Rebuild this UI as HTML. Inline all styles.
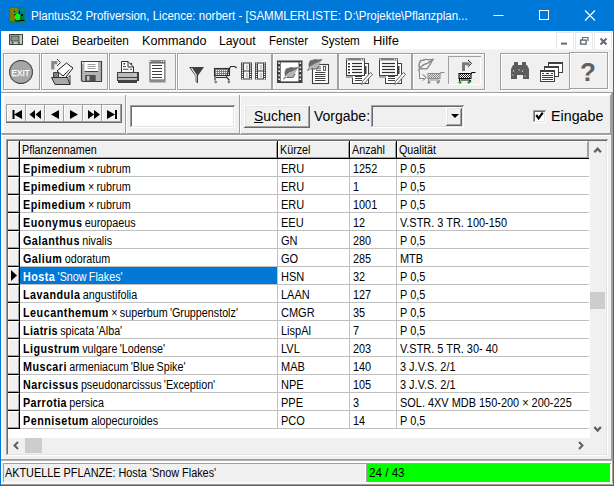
<!DOCTYPE html>
<html><head><meta charset="utf-8"><style>
html,body{margin:0;padding:0;width:614px;height:486px;overflow:hidden;background:#0078d7}
body{position:relative;font-family:"Liberation Sans",sans-serif}
div,span,svg{position:absolute;display:block}
span{white-space:pre}
b{font-weight:bold}
</style></head><body>
<div style="left:0px;top:0px;width:614px;height:486px;background:#0078d7;"></div>
<div style="left:1px;top:31px;width:612px;height:453px;background:#f0f0f0;"></div>
<span style="left:31px;top:9.84px;font-size:12px;line-height:12px;color:#fff;font-weight:normal;transform:scaleX(0.96);transform-origin:0 0;">Plantus32 Profiversion, Licence: norbert - [SAMMLERLISTE: D:\Projekte\Pflanzplan...</span>
<div style="left:1px;top:31px;width:612px;height:18px;background:#ffffff;"></div>
<span style="left:31px;top:34.84px;font-size:12px;line-height:12px;color:#000;font-weight:normal;">Datei</span>
<span style="left:72px;top:34.84px;font-size:12px;line-height:12px;color:#000;font-weight:normal;transform:scaleX(0.98);transform-origin:0 0;">Bearbeiten</span>
<span style="left:142px;top:34.84px;font-size:12px;line-height:12px;color:#000;font-weight:normal;transform:scaleX(1.05);transform-origin:0 0;">Kommando</span>
<span style="left:219px;top:34.84px;font-size:12px;line-height:12px;color:#000;font-weight:normal;transform:scaleX(1.02);transform-origin:0 0;">Layout</span>
<span style="left:269px;top:34.84px;font-size:12px;line-height:12px;color:#000;font-weight:normal;transform:scaleX(0.96);transform-origin:0 0;">Fenster</span>
<span style="left:321px;top:34.84px;font-size:12px;line-height:12px;color:#000;font-weight:normal;transform:scaleX(0.97);transform-origin:0 0;">System</span>
<span style="left:373px;top:34.84px;font-size:12px;line-height:12px;color:#000;font-weight:normal;transform:scaleX(1.08);transform-origin:0 0;">Hilfe</span>
<div style="left:556px;top:32px;width:18px;height:1px;background:#e8e8e8;"></div>
<div style="left:556px;top:32px;width:1px;height:18px;background:#e8e8e8;"></div>
<div style="left:556px;top:49px;width:18px;height:1px;background:#e8e8e8;"></div>
<div style="left:573px;top:33px;width:1px;height:17px;background:#e8e8e8;"></div>
<div style="left:575px;top:32px;width:18px;height:1px;background:#e8e8e8;"></div>
<div style="left:575px;top:32px;width:1px;height:18px;background:#e8e8e8;"></div>
<div style="left:575px;top:49px;width:18px;height:1px;background:#e8e8e8;"></div>
<div style="left:592px;top:33px;width:1px;height:17px;background:#e8e8e8;"></div>
<div style="left:594px;top:32px;width:18px;height:1px;background:#e8e8e8;"></div>
<div style="left:594px;top:32px;width:1px;height:18px;background:#e8e8e8;"></div>
<div style="left:594px;top:49px;width:18px;height:1px;background:#e8e8e8;"></div>
<div style="left:611px;top:33px;width:1px;height:17px;background:#e8e8e8;"></div>
<div style="left:1px;top:49px;width:612px;height:1px;background:#f5f5f5;"></div>
<div style="left:4px;top:54px;width:37px;height:1px;background:#ffffff;"></div>
<div style="left:4px;top:54px;width:1px;height:37px;background:#ffffff;"></div>
<div style="left:4px;top:90px;width:37px;height:1px;background:#ffffff;"></div>
<div style="left:40px;top:55px;width:1px;height:36px;background:#ffffff;"></div>
<div style="left:3px;top:53px;width:37px;height:1px;background:#a0a0a0;"></div>
<div style="left:3px;top:53px;width:1px;height:37px;background:#a0a0a0;"></div>
<div style="left:3px;top:89px;width:37px;height:1px;background:#a0a0a0;"></div>
<div style="left:39px;top:54px;width:1px;height:36px;background:#a0a0a0;"></div>
<div style="left:42px;top:54px;width:67px;height:1px;background:#ffffff;"></div>
<div style="left:42px;top:54px;width:1px;height:37px;background:#ffffff;"></div>
<div style="left:42px;top:90px;width:67px;height:1px;background:#ffffff;"></div>
<div style="left:108px;top:55px;width:1px;height:36px;background:#ffffff;"></div>
<div style="left:41px;top:53px;width:67px;height:1px;background:#a0a0a0;"></div>
<div style="left:41px;top:53px;width:1px;height:37px;background:#a0a0a0;"></div>
<div style="left:41px;top:89px;width:67px;height:1px;background:#a0a0a0;"></div>
<div style="left:107px;top:54px;width:1px;height:36px;background:#a0a0a0;"></div>
<div style="left:110px;top:54px;width:67px;height:1px;background:#ffffff;"></div>
<div style="left:110px;top:54px;width:1px;height:37px;background:#ffffff;"></div>
<div style="left:110px;top:90px;width:67px;height:1px;background:#ffffff;"></div>
<div style="left:176px;top:55px;width:1px;height:36px;background:#ffffff;"></div>
<div style="left:109px;top:53px;width:67px;height:1px;background:#a0a0a0;"></div>
<div style="left:109px;top:53px;width:1px;height:37px;background:#a0a0a0;"></div>
<div style="left:109px;top:89px;width:67px;height:1px;background:#a0a0a0;"></div>
<div style="left:175px;top:54px;width:1px;height:36px;background:#a0a0a0;"></div>
<div style="left:178px;top:54px;width:95px;height:1px;background:#ffffff;"></div>
<div style="left:178px;top:54px;width:1px;height:37px;background:#ffffff;"></div>
<div style="left:178px;top:90px;width:95px;height:1px;background:#ffffff;"></div>
<div style="left:272px;top:55px;width:1px;height:36px;background:#ffffff;"></div>
<div style="left:177px;top:53px;width:95px;height:1px;background:#a0a0a0;"></div>
<div style="left:177px;top:53px;width:1px;height:37px;background:#a0a0a0;"></div>
<div style="left:177px;top:89px;width:95px;height:1px;background:#a0a0a0;"></div>
<div style="left:271px;top:54px;width:1px;height:36px;background:#a0a0a0;"></div>
<div style="left:273px;top:54px;width:66px;height:1px;background:#ffffff;"></div>
<div style="left:273px;top:54px;width:1px;height:37px;background:#ffffff;"></div>
<div style="left:273px;top:90px;width:66px;height:1px;background:#ffffff;"></div>
<div style="left:338px;top:55px;width:1px;height:36px;background:#ffffff;"></div>
<div style="left:272px;top:53px;width:66px;height:1px;background:#a0a0a0;"></div>
<div style="left:272px;top:53px;width:1px;height:37px;background:#a0a0a0;"></div>
<div style="left:272px;top:89px;width:66px;height:1px;background:#a0a0a0;"></div>
<div style="left:337px;top:54px;width:1px;height:36px;background:#a0a0a0;"></div>
<div style="left:339px;top:54px;width:74px;height:1px;background:#ffffff;"></div>
<div style="left:339px;top:54px;width:1px;height:37px;background:#ffffff;"></div>
<div style="left:339px;top:90px;width:74px;height:1px;background:#ffffff;"></div>
<div style="left:412px;top:55px;width:1px;height:36px;background:#ffffff;"></div>
<div style="left:338px;top:53px;width:74px;height:1px;background:#a0a0a0;"></div>
<div style="left:338px;top:53px;width:1px;height:37px;background:#a0a0a0;"></div>
<div style="left:338px;top:89px;width:74px;height:1px;background:#a0a0a0;"></div>
<div style="left:411px;top:54px;width:1px;height:36px;background:#a0a0a0;"></div>
<div style="left:413px;top:54px;width:73px;height:1px;background:#ffffff;"></div>
<div style="left:413px;top:54px;width:1px;height:37px;background:#ffffff;"></div>
<div style="left:413px;top:90px;width:73px;height:1px;background:#ffffff;"></div>
<div style="left:485px;top:55px;width:1px;height:36px;background:#ffffff;"></div>
<div style="left:412px;top:53px;width:73px;height:1px;background:#a0a0a0;"></div>
<div style="left:412px;top:53px;width:1px;height:37px;background:#a0a0a0;"></div>
<div style="left:412px;top:89px;width:73px;height:1px;background:#a0a0a0;"></div>
<div style="left:484px;top:54px;width:1px;height:36px;background:#a0a0a0;"></div>
<div style="left:501px;top:54px;width:70px;height:1px;background:#ffffff;"></div>
<div style="left:501px;top:54px;width:1px;height:37px;background:#ffffff;"></div>
<div style="left:501px;top:90px;width:70px;height:1px;background:#ffffff;"></div>
<div style="left:570px;top:55px;width:1px;height:36px;background:#ffffff;"></div>
<div style="left:500px;top:53px;width:70px;height:1px;background:#a0a0a0;"></div>
<div style="left:500px;top:53px;width:1px;height:37px;background:#a0a0a0;"></div>
<div style="left:500px;top:89px;width:70px;height:1px;background:#a0a0a0;"></div>
<div style="left:569px;top:54px;width:1px;height:36px;background:#a0a0a0;"></div>
<div style="left:570px;top:53px;width:39px;height:1px;background:#ffffff;"></div>
<div style="left:570px;top:53px;width:1px;height:37px;background:#ffffff;"></div>
<div style="left:570px;top:89px;width:39px;height:1px;background:#ffffff;"></div>
<div style="left:608px;top:54px;width:1px;height:36px;background:#ffffff;"></div>
<div style="left:569px;top:52px;width:39px;height:1px;background:#a0a0a0;"></div>
<div style="left:569px;top:52px;width:1px;height:37px;background:#a0a0a0;"></div>
<div style="left:569px;top:88px;width:39px;height:1px;background:#a0a0a0;"></div>
<div style="left:607px;top:53px;width:1px;height:36px;background:#a0a0a0;"></div>
<div style="left:448px;top:56px;width:33px;height:1px;background:#a0a0a0;"></div>
<div style="left:448px;top:56px;width:1px;height:29px;background:#a0a0a0;"></div>
<div style="left:448px;top:84px;width:33px;height:1px;background:#ffffff;"></div>
<div style="left:480px;top:57px;width:1px;height:28px;background:#ffffff;"></div>
<div style="left:1px;top:92px;width:612px;height:1px;background:#a0a0a0;"></div>
<div style="left:1px;top:93px;width:612px;height:1px;background:#ffffff;"></div>
<div style="left:1px;top:94px;width:612px;height:1px;background:#ffffff;"></div>
<div style="left:1px;top:95px;width:612px;height:1px;background:#ffffff;"></div>
<div style="left:1px;top:93px;width:1px;height:41px;background:#ffffff;"></div>
<div style="left:2px;top:93px;width:1px;height:41px;background:#ffffff;"></div>
<div style="left:3px;top:93px;width:1px;height:41px;background:#ffffff;"></div>
<div style="left:610px;top:95px;width:1px;height:39px;background:#a0a0a0;"></div>
<div style="left:611px;top:93px;width:1px;height:41px;background:#a0a0a0;"></div>
<div style="left:612px;top:93px;width:1px;height:41px;background:#a0a0a0;"></div>
<div style="left:1px;top:133px;width:612px;height:1px;background:#a0a0a0;"></div>
<div style="left:6px;top:104px;width:116px;height:19px;background:#f0f0f0;"></div>
<div style="left:6px;top:104px;width:116px;height:1px;background:#a0a0a0;"></div>
<div style="left:6px;top:104px;width:1px;height:19px;background:#a0a0a0;"></div>
<div style="left:6px;top:122px;width:116px;height:1px;background:#696969;"></div>
<div style="left:121px;top:104px;width:1px;height:19px;background:#696969;"></div>
<div style="left:7px;top:105px;width:19px;height:1px;background:#ffffff;"></div>
<div style="left:7px;top:105px;width:1px;height:17px;background:#ffffff;"></div>
<div style="left:7px;top:121px;width:19px;height:1px;background:#a0a0a0;"></div>
<div style="left:25px;top:105px;width:1px;height:17px;background:#a0a0a0;"></div>
<div style="left:26px;top:105px;width:19px;height:1px;background:#ffffff;"></div>
<div style="left:26px;top:105px;width:1px;height:17px;background:#ffffff;"></div>
<div style="left:26px;top:121px;width:19px;height:1px;background:#a0a0a0;"></div>
<div style="left:44px;top:105px;width:1px;height:17px;background:#a0a0a0;"></div>
<div style="left:45px;top:105px;width:19px;height:1px;background:#ffffff;"></div>
<div style="left:45px;top:105px;width:1px;height:17px;background:#ffffff;"></div>
<div style="left:45px;top:121px;width:19px;height:1px;background:#a0a0a0;"></div>
<div style="left:63px;top:105px;width:1px;height:17px;background:#a0a0a0;"></div>
<div style="left:64px;top:105px;width:19px;height:1px;background:#ffffff;"></div>
<div style="left:64px;top:105px;width:1px;height:17px;background:#ffffff;"></div>
<div style="left:64px;top:121px;width:19px;height:1px;background:#a0a0a0;"></div>
<div style="left:82px;top:105px;width:1px;height:17px;background:#a0a0a0;"></div>
<div style="left:83px;top:105px;width:19px;height:1px;background:#ffffff;"></div>
<div style="left:83px;top:105px;width:1px;height:17px;background:#ffffff;"></div>
<div style="left:83px;top:121px;width:19px;height:1px;background:#a0a0a0;"></div>
<div style="left:101px;top:105px;width:1px;height:17px;background:#a0a0a0;"></div>
<div style="left:102px;top:105px;width:19px;height:1px;background:#ffffff;"></div>
<div style="left:102px;top:105px;width:1px;height:17px;background:#ffffff;"></div>
<div style="left:102px;top:121px;width:19px;height:1px;background:#a0a0a0;"></div>
<div style="left:120px;top:105px;width:1px;height:17px;background:#a0a0a0;"></div>
<div style="left:125px;top:95px;width:1px;height:39px;background:#a0a0a0;"></div>
<div style="left:126px;top:95px;width:1px;height:39px;background:#ffffff;"></div>
<div style="left:239px;top:95px;width:1px;height:39px;background:#a0a0a0;"></div>
<div style="left:240px;top:95px;width:1px;height:39px;background:#ffffff;"></div>
<div style="left:130px;top:105px;width:105px;height:23px;background:#ffffff;"></div>
<div style="left:130px;top:105px;width:105px;height:1px;background:#a0a0a0;"></div>
<div style="left:130px;top:105px;width:1px;height:23px;background:#a0a0a0;"></div>
<div style="left:130px;top:127px;width:105px;height:1px;background:#ffffff;"></div>
<div style="left:234px;top:106px;width:1px;height:22px;background:#ffffff;"></div>
<div style="left:131px;top:106px;width:103px;height:1px;background:#696969;"></div>
<div style="left:131px;top:106px;width:1px;height:21px;background:#696969;"></div>
<div style="left:131px;top:126px;width:103px;height:1px;background:#e3e3e3;"></div>
<div style="left:233px;top:107px;width:1px;height:20px;background:#e3e3e3;"></div>
<div style="left:244px;top:105px;width:66px;height:23px;background:#f0f0f0;"></div>
<div style="left:244px;top:105px;width:66px;height:1px;background:#ffffff;"></div>
<div style="left:244px;top:105px;width:1px;height:23px;background:#ffffff;"></div>
<div style="left:244px;top:127px;width:66px;height:1px;background:#696969;"></div>
<div style="left:309px;top:106px;width:1px;height:22px;background:#696969;"></div>
<div style="left:245px;top:106px;width:64px;height:1px;background:#e3e3e3;"></div>
<div style="left:245px;top:106px;width:1px;height:21px;background:#e3e3e3;"></div>
<div style="left:245px;top:126px;width:64px;height:1px;background:#a0a0a0;"></div>
<div style="left:308px;top:107px;width:1px;height:20px;background:#a0a0a0;"></div>
<span style="left:254px;top:109.15px;font-size:14px;line-height:14px;color:#000;font-weight:normal;transform:scaleX(0.99);transform-origin:0 0;"><u>S</u>uchen</span>
<span style="left:314px;top:109.15px;font-size:14px;line-height:14px;color:#000;font-weight:normal;">Vorgabe:</span>
<div style="left:371px;top:105px;width:93px;height:1px;background:#a0a0a0;"></div>
<div style="left:371px;top:105px;width:1px;height:23px;background:#a0a0a0;"></div>
<div style="left:371px;top:127px;width:93px;height:1px;background:#ffffff;"></div>
<div style="left:463px;top:106px;width:1px;height:22px;background:#ffffff;"></div>
<div style="left:372px;top:106px;width:91px;height:1px;background:#696969;"></div>
<div style="left:372px;top:106px;width:1px;height:21px;background:#696969;"></div>
<div style="left:372px;top:126px;width:91px;height:1px;background:#e3e3e3;"></div>
<div style="left:462px;top:107px;width:1px;height:20px;background:#e3e3e3;"></div>
<div style="left:446px;top:107px;width:16px;height:1px;background:#ffffff;"></div>
<div style="left:446px;top:107px;width:1px;height:19px;background:#ffffff;"></div>
<div style="left:446px;top:125px;width:16px;height:1px;background:#696969;"></div>
<div style="left:461px;top:108px;width:1px;height:18px;background:#696969;"></div>
<div style="left:447px;top:108px;width:14px;height:1px;background:#e3e3e3;"></div>
<div style="left:447px;top:108px;width:1px;height:17px;background:#e3e3e3;"></div>
<div style="left:447px;top:124px;width:14px;height:1px;background:#a0a0a0;"></div>
<div style="left:460px;top:109px;width:1px;height:16px;background:#a0a0a0;"></div>
<div style="left:533px;top:110px;width:13px;height:13px;background:#ffffff;"></div>
<div style="left:533px;top:110px;width:13px;height:1px;background:#a0a0a0;"></div>
<div style="left:533px;top:110px;width:1px;height:13px;background:#a0a0a0;"></div>
<div style="left:533px;top:122px;width:13px;height:1px;background:#ffffff;"></div>
<div style="left:545px;top:111px;width:1px;height:12px;background:#ffffff;"></div>
<div style="left:534px;top:111px;width:11px;height:1px;background:#696969;"></div>
<div style="left:534px;top:111px;width:1px;height:11px;background:#696969;"></div>
<div style="left:534px;top:121px;width:11px;height:1px;background:#e3e3e3;"></div>
<div style="left:544px;top:112px;width:1px;height:10px;background:#e3e3e3;"></div>
<span style="left:551px;top:109.15px;font-size:14px;line-height:14px;color:#000;font-weight:normal;transform:scaleX(1.02);transform-origin:0 0;">Eingabe</span>
<div style="left:2px;top:134px;width:611px;height:1px;background:#a0a0a0;"></div>
<div style="left:1px;top:135px;width:612px;height:1px;background:#ffffff;"></div>
<div style="left:1px;top:134px;width:1px;height:327px;background:#ffffff;"></div>
<div style="left:2px;top:135px;width:1px;height:326px;background:#ffffff;"></div>
<div style="left:611px;top:134px;width:1px;height:327px;background:#a0a0a0;"></div>
<div style="left:612px;top:134px;width:1px;height:327px;background:#a0a0a0;"></div>
<div style="left:1px;top:459px;width:612px;height:1px;background:#a0a0a0;"></div>
<div style="left:1px;top:460px;width:612px;height:1px;background:#b0b0b0;"></div>
<div style="left:6px;top:139px;width:602px;height:317px;background:#ffffff;"></div>
<div style="left:6px;top:139px;width:602px;height:1px;background:#a0a0a0;"></div>
<div style="left:6px;top:139px;width:1px;height:317px;background:#a0a0a0;"></div>
<div style="left:6px;top:455px;width:602px;height:1px;background:#ffffff;"></div>
<div style="left:607px;top:140px;width:1px;height:316px;background:#ffffff;"></div>
<div style="left:7px;top:140px;width:600px;height:1px;background:#696969;"></div>
<div style="left:7px;top:140px;width:1px;height:315px;background:#696969;"></div>
<div style="left:7px;top:454px;width:600px;height:1px;background:#e3e3e3;"></div>
<div style="left:606px;top:141px;width:1px;height:314px;background:#e3e3e3;"></div>
<div style="left:8px;top:141px;width:581px;height:17px;background:#f0f0f0;"></div>
<div style="left:8px;top:141px;width:11px;height:1px;background:#ffffff;"></div>
<div style="left:8px;top:141px;width:1px;height:17px;background:#ffffff;"></div>
<div style="left:8px;top:157px;width:11px;height:1px;background:#a0a0a0;"></div>
<div style="left:18px;top:142px;width:1px;height:16px;background:#a0a0a0;"></div>
<div style="left:19px;top:141px;width:1px;height:18px;background:#000;"></div>
<div style="left:20px;top:141px;width:257px;height:1px;background:#ffffff;"></div>
<div style="left:20px;top:141px;width:1px;height:17px;background:#ffffff;"></div>
<div style="left:20px;top:157px;width:257px;height:1px;background:#a0a0a0;"></div>
<div style="left:276px;top:142px;width:1px;height:16px;background:#a0a0a0;"></div>
<div style="left:277px;top:141px;width:1px;height:18px;background:#000;"></div>
<div style="left:278px;top:141px;width:71px;height:1px;background:#ffffff;"></div>
<div style="left:278px;top:141px;width:1px;height:17px;background:#ffffff;"></div>
<div style="left:278px;top:157px;width:71px;height:1px;background:#a0a0a0;"></div>
<div style="left:348px;top:142px;width:1px;height:16px;background:#a0a0a0;"></div>
<div style="left:349px;top:141px;width:1px;height:18px;background:#000;"></div>
<div style="left:350px;top:141px;width:46px;height:1px;background:#ffffff;"></div>
<div style="left:350px;top:141px;width:1px;height:17px;background:#ffffff;"></div>
<div style="left:350px;top:157px;width:46px;height:1px;background:#a0a0a0;"></div>
<div style="left:395px;top:142px;width:1px;height:16px;background:#a0a0a0;"></div>
<div style="left:396px;top:141px;width:1px;height:18px;background:#000;"></div>
<div style="left:397px;top:141px;width:191px;height:1px;background:#ffffff;"></div>
<div style="left:397px;top:141px;width:1px;height:17px;background:#ffffff;"></div>
<div style="left:397px;top:157px;width:191px;height:1px;background:#a0a0a0;"></div>
<div style="left:587px;top:142px;width:1px;height:16px;background:#a0a0a0;"></div>
<div style="left:588px;top:141px;width:1px;height:17px;background:#a0a0a0;"></div>
<div style="left:8px;top:158px;width:581px;height:1px;background:#000;"></div>
<span style="left:22px;top:144.42px;font-size:12.5px;line-height:12.5px;color:#000;font-weight:normal;transform:scaleX(0.86);transform-origin:0 0;">Pflanzennamen</span>
<span style="left:280px;top:144.42px;font-size:12.5px;line-height:12.5px;color:#000;font-weight:normal;transform:scaleX(0.86);transform-origin:0 0;">Kürzel</span>
<span style="left:352px;top:144.42px;font-size:12.5px;line-height:12.5px;color:#000;font-weight:normal;transform:scaleX(0.86);transform-origin:0 0;">Anzahl</span>
<span style="left:399px;top:144.42px;font-size:12.5px;line-height:12.5px;color:#000;font-weight:normal;transform:scaleX(0.86);transform-origin:0 0;">Qualität</span>
<div style="left:8px;top:159px;width:11px;height:1px;background:#ffffff;"></div>
<div style="left:8px;top:159px;width:1px;height:17px;background:#ffffff;"></div>
<div style="left:8px;top:175px;width:11px;height:1px;background:#a0a0a0;"></div>
<div style="left:18px;top:160px;width:1px;height:16px;background:#a0a0a0;"></div>
<div style="left:9px;top:160px;width:9px;height:15px;background:#f0f0f0;"></div>
<div style="left:19px;top:159px;width:1px;height:18px;background:#000;"></div>
<div style="left:8px;top:176px;width:12px;height:1px;background:#000;"></div>
<div style="left:20px;top:176px;width:569px;height:1px;background:#c0c0c0;"></div>
<div style="left:277px;top:159px;width:1px;height:18px;background:#c0c0c0;"></div>
<div style="left:349px;top:159px;width:1px;height:18px;background:#c0c0c0;"></div>
<div style="left:396px;top:159px;width:1px;height:18px;background:#c0c0c0;"></div>
<span style="left:23px;top:163.42px;font-size:12.5px;line-height:12.5px;color:#000;transform:scaleX(0.86);transform-origin:0 0;word-spacing:-0.8px"><b style="letter-spacing:0.609px">Epimedium</b> × rubrum</span>
<span style="left:281px;top:163.42px;font-size:12.5px;line-height:12.5px;color:#000;font-weight:normal;transform:scaleX(0.88);transform-origin:0 0;">ERU</span>
<span style="left:353px;top:163.42px;font-size:12.5px;line-height:12.5px;color:#000;font-weight:normal;transform:scaleX(0.87);transform-origin:0 0;">1252</span>
<span style="left:400px;top:163.42px;font-size:12.5px;line-height:12.5px;color:#000;font-weight:normal;transform:scaleX(0.875);transform-origin:0 0;">P 0,5</span>
<div style="left:8px;top:177px;width:11px;height:1px;background:#ffffff;"></div>
<div style="left:8px;top:177px;width:1px;height:17px;background:#ffffff;"></div>
<div style="left:8px;top:193px;width:11px;height:1px;background:#a0a0a0;"></div>
<div style="left:18px;top:178px;width:1px;height:16px;background:#a0a0a0;"></div>
<div style="left:9px;top:178px;width:9px;height:15px;background:#f0f0f0;"></div>
<div style="left:19px;top:177px;width:1px;height:18px;background:#000;"></div>
<div style="left:8px;top:194px;width:12px;height:1px;background:#000;"></div>
<div style="left:20px;top:194px;width:569px;height:1px;background:#c0c0c0;"></div>
<div style="left:277px;top:177px;width:1px;height:18px;background:#c0c0c0;"></div>
<div style="left:349px;top:177px;width:1px;height:18px;background:#c0c0c0;"></div>
<div style="left:396px;top:177px;width:1px;height:18px;background:#c0c0c0;"></div>
<span style="left:23px;top:181.42px;font-size:12.5px;line-height:12.5px;color:#000;transform:scaleX(0.86);transform-origin:0 0;word-spacing:-0.8px"><b style="letter-spacing:0.609px">Epimedium</b> × rubrum</span>
<span style="left:281px;top:181.42px;font-size:12.5px;line-height:12.5px;color:#000;font-weight:normal;transform:scaleX(0.88);transform-origin:0 0;">ERU</span>
<span style="left:353px;top:181.42px;font-size:12.5px;line-height:12.5px;color:#000;font-weight:normal;transform:scaleX(0.87);transform-origin:0 0;">1</span>
<span style="left:400px;top:181.42px;font-size:12.5px;line-height:12.5px;color:#000;font-weight:normal;transform:scaleX(0.875);transform-origin:0 0;">P 0,5</span>
<div style="left:8px;top:195px;width:11px;height:1px;background:#ffffff;"></div>
<div style="left:8px;top:195px;width:1px;height:17px;background:#ffffff;"></div>
<div style="left:8px;top:211px;width:11px;height:1px;background:#a0a0a0;"></div>
<div style="left:18px;top:196px;width:1px;height:16px;background:#a0a0a0;"></div>
<div style="left:9px;top:196px;width:9px;height:15px;background:#f0f0f0;"></div>
<div style="left:19px;top:195px;width:1px;height:18px;background:#000;"></div>
<div style="left:8px;top:212px;width:12px;height:1px;background:#000;"></div>
<div style="left:20px;top:212px;width:569px;height:1px;background:#c0c0c0;"></div>
<div style="left:277px;top:195px;width:1px;height:18px;background:#c0c0c0;"></div>
<div style="left:349px;top:195px;width:1px;height:18px;background:#c0c0c0;"></div>
<div style="left:396px;top:195px;width:1px;height:18px;background:#c0c0c0;"></div>
<span style="left:23px;top:199.42px;font-size:12.5px;line-height:12.5px;color:#000;transform:scaleX(0.86);transform-origin:0 0;word-spacing:-0.8px"><b style="letter-spacing:0.609px">Epimedium</b> × rubrum</span>
<span style="left:281px;top:199.42px;font-size:12.5px;line-height:12.5px;color:#000;font-weight:normal;transform:scaleX(0.88);transform-origin:0 0;">ERU</span>
<span style="left:353px;top:199.42px;font-size:12.5px;line-height:12.5px;color:#000;font-weight:normal;transform:scaleX(0.87);transform-origin:0 0;">1001</span>
<span style="left:400px;top:199.42px;font-size:12.5px;line-height:12.5px;color:#000;font-weight:normal;transform:scaleX(0.875);transform-origin:0 0;">P 0,5</span>
<div style="left:8px;top:213px;width:11px;height:1px;background:#ffffff;"></div>
<div style="left:8px;top:213px;width:1px;height:17px;background:#ffffff;"></div>
<div style="left:8px;top:229px;width:11px;height:1px;background:#a0a0a0;"></div>
<div style="left:18px;top:214px;width:1px;height:16px;background:#a0a0a0;"></div>
<div style="left:9px;top:214px;width:9px;height:15px;background:#f0f0f0;"></div>
<div style="left:19px;top:213px;width:1px;height:18px;background:#000;"></div>
<div style="left:8px;top:230px;width:12px;height:1px;background:#000;"></div>
<div style="left:20px;top:230px;width:569px;height:1px;background:#c0c0c0;"></div>
<div style="left:277px;top:213px;width:1px;height:18px;background:#c0c0c0;"></div>
<div style="left:349px;top:213px;width:1px;height:18px;background:#c0c0c0;"></div>
<div style="left:396px;top:213px;width:1px;height:18px;background:#c0c0c0;"></div>
<span style="left:23px;top:217.42px;font-size:12.5px;line-height:12.5px;color:#000;transform:scaleX(0.86);transform-origin:0 0;word-spacing:-0.8px"><b style="letter-spacing:0.65px">Euonymus</b> europaeus</span>
<span style="left:281px;top:217.42px;font-size:12.5px;line-height:12.5px;color:#000;font-weight:normal;transform:scaleX(0.88);transform-origin:0 0;">EEU</span>
<span style="left:353px;top:217.42px;font-size:12.5px;line-height:12.5px;color:#000;font-weight:normal;transform:scaleX(0.87);transform-origin:0 0;">12</span>
<span style="left:400px;top:217.42px;font-size:12.5px;line-height:12.5px;color:#000;font-weight:normal;transform:scaleX(0.875);transform-origin:0 0;">V.STR. 3 TR. 100-150</span>
<div style="left:8px;top:231px;width:11px;height:1px;background:#ffffff;"></div>
<div style="left:8px;top:231px;width:1px;height:17px;background:#ffffff;"></div>
<div style="left:8px;top:247px;width:11px;height:1px;background:#a0a0a0;"></div>
<div style="left:18px;top:232px;width:1px;height:16px;background:#a0a0a0;"></div>
<div style="left:9px;top:232px;width:9px;height:15px;background:#f0f0f0;"></div>
<div style="left:19px;top:231px;width:1px;height:18px;background:#000;"></div>
<div style="left:8px;top:248px;width:12px;height:1px;background:#000;"></div>
<div style="left:20px;top:248px;width:569px;height:1px;background:#c0c0c0;"></div>
<div style="left:277px;top:231px;width:1px;height:18px;background:#c0c0c0;"></div>
<div style="left:349px;top:231px;width:1px;height:18px;background:#c0c0c0;"></div>
<div style="left:396px;top:231px;width:1px;height:18px;background:#c0c0c0;"></div>
<span style="left:23px;top:235.42px;font-size:12.5px;line-height:12.5px;color:#000;transform:scaleX(0.86);transform-origin:0 0;word-spacing:-0.8px"><b style="letter-spacing:0.553px">Galanthus</b> nivalis</span>
<span style="left:281px;top:235.42px;font-size:12.5px;line-height:12.5px;color:#000;font-weight:normal;transform:scaleX(0.88);transform-origin:0 0;">GN</span>
<span style="left:353px;top:235.42px;font-size:12.5px;line-height:12.5px;color:#000;font-weight:normal;transform:scaleX(0.87);transform-origin:0 0;">280</span>
<span style="left:400px;top:235.42px;font-size:12.5px;line-height:12.5px;color:#000;font-weight:normal;transform:scaleX(0.875);transform-origin:0 0;">P 0,5</span>
<div style="left:8px;top:249px;width:11px;height:1px;background:#ffffff;"></div>
<div style="left:8px;top:249px;width:1px;height:17px;background:#ffffff;"></div>
<div style="left:8px;top:265px;width:11px;height:1px;background:#a0a0a0;"></div>
<div style="left:18px;top:250px;width:1px;height:16px;background:#a0a0a0;"></div>
<div style="left:9px;top:250px;width:9px;height:15px;background:#f0f0f0;"></div>
<div style="left:19px;top:249px;width:1px;height:18px;background:#000;"></div>
<div style="left:8px;top:266px;width:12px;height:1px;background:#000;"></div>
<div style="left:20px;top:266px;width:569px;height:1px;background:#c0c0c0;"></div>
<div style="left:277px;top:249px;width:1px;height:18px;background:#c0c0c0;"></div>
<div style="left:349px;top:249px;width:1px;height:18px;background:#c0c0c0;"></div>
<div style="left:396px;top:249px;width:1px;height:18px;background:#c0c0c0;"></div>
<span style="left:23px;top:253.42px;font-size:12.5px;line-height:12.5px;color:#000;transform:scaleX(0.86);transform-origin:0 0;word-spacing:-0.8px"><b style="letter-spacing:0.575px">Galium</b> odoratum</span>
<span style="left:281px;top:253.42px;font-size:12.5px;line-height:12.5px;color:#000;font-weight:normal;transform:scaleX(0.88);transform-origin:0 0;">GO</span>
<span style="left:353px;top:253.42px;font-size:12.5px;line-height:12.5px;color:#000;font-weight:normal;transform:scaleX(0.87);transform-origin:0 0;">285</span>
<span style="left:400px;top:253.42px;font-size:12.5px;line-height:12.5px;color:#000;font-weight:normal;transform:scaleX(0.875);transform-origin:0 0;">MTB</span>
<div style="left:8px;top:267px;width:11px;height:1px;background:#ffffff;"></div>
<div style="left:8px;top:267px;width:1px;height:17px;background:#ffffff;"></div>
<div style="left:8px;top:283px;width:11px;height:1px;background:#a0a0a0;"></div>
<div style="left:18px;top:268px;width:1px;height:16px;background:#a0a0a0;"></div>
<div style="left:9px;top:268px;width:9px;height:15px;background:#f0f0f0;"></div>
<div style="left:19px;top:267px;width:1px;height:18px;background:#000;"></div>
<div style="left:8px;top:284px;width:12px;height:1px;background:#000;"></div>
<div style="left:20px;top:267px;width:258px;height:17px;background:#0078d7;"></div>
<div style="left:20px;top:284px;width:569px;height:1px;background:#c0c0c0;"></div>
<div style="left:277px;top:267px;width:1px;height:18px;background:#c0c0c0;"></div>
<div style="left:349px;top:267px;width:1px;height:18px;background:#c0c0c0;"></div>
<div style="left:396px;top:267px;width:1px;height:18px;background:#c0c0c0;"></div>
<span style="left:23px;top:271.42px;font-size:12.5px;line-height:12.5px;color:#fff;transform:scaleX(0.86);transform-origin:0 0;word-spacing:-0.8px"><b style="letter-spacing:0.565px">Hosta</b> 'Snow Flakes'</span>
<span style="left:281px;top:271.42px;font-size:12.5px;line-height:12.5px;color:#000;font-weight:normal;transform:scaleX(0.88);transform-origin:0 0;">HSN</span>
<span style="left:353px;top:271.42px;font-size:12.5px;line-height:12.5px;color:#000;font-weight:normal;transform:scaleX(0.87);transform-origin:0 0;">32</span>
<span style="left:400px;top:271.42px;font-size:12.5px;line-height:12.5px;color:#000;font-weight:normal;transform:scaleX(0.875);transform-origin:0 0;">P 0,5</span>
<div style="left:8px;top:285px;width:11px;height:1px;background:#ffffff;"></div>
<div style="left:8px;top:285px;width:1px;height:17px;background:#ffffff;"></div>
<div style="left:8px;top:301px;width:11px;height:1px;background:#a0a0a0;"></div>
<div style="left:18px;top:286px;width:1px;height:16px;background:#a0a0a0;"></div>
<div style="left:9px;top:286px;width:9px;height:15px;background:#f0f0f0;"></div>
<div style="left:19px;top:285px;width:1px;height:18px;background:#000;"></div>
<div style="left:8px;top:302px;width:12px;height:1px;background:#000;"></div>
<div style="left:20px;top:302px;width:569px;height:1px;background:#c0c0c0;"></div>
<div style="left:277px;top:285px;width:1px;height:18px;background:#c0c0c0;"></div>
<div style="left:349px;top:285px;width:1px;height:18px;background:#c0c0c0;"></div>
<div style="left:396px;top:285px;width:1px;height:18px;background:#c0c0c0;"></div>
<span style="left:23px;top:289.42px;font-size:12.5px;line-height:12.5px;color:#000;transform:scaleX(0.86);transform-origin:0 0;word-spacing:-0.8px"><b style="letter-spacing:0.559px">Lavandula</b> angustifolia</span>
<span style="left:281px;top:289.42px;font-size:12.5px;line-height:12.5px;color:#000;font-weight:normal;transform:scaleX(0.88);transform-origin:0 0;">LAAN</span>
<span style="left:353px;top:289.42px;font-size:12.5px;line-height:12.5px;color:#000;font-weight:normal;transform:scaleX(0.87);transform-origin:0 0;">127</span>
<span style="left:400px;top:289.42px;font-size:12.5px;line-height:12.5px;color:#000;font-weight:normal;transform:scaleX(0.875);transform-origin:0 0;">P 0,5</span>
<div style="left:8px;top:303px;width:11px;height:1px;background:#ffffff;"></div>
<div style="left:8px;top:303px;width:1px;height:17px;background:#ffffff;"></div>
<div style="left:8px;top:319px;width:11px;height:1px;background:#a0a0a0;"></div>
<div style="left:18px;top:304px;width:1px;height:16px;background:#a0a0a0;"></div>
<div style="left:9px;top:304px;width:9px;height:15px;background:#f0f0f0;"></div>
<div style="left:19px;top:303px;width:1px;height:18px;background:#000;"></div>
<div style="left:8px;top:320px;width:12px;height:1px;background:#000;"></div>
<div style="left:20px;top:320px;width:569px;height:1px;background:#c0c0c0;"></div>
<div style="left:277px;top:303px;width:1px;height:18px;background:#c0c0c0;"></div>
<div style="left:349px;top:303px;width:1px;height:18px;background:#c0c0c0;"></div>
<div style="left:396px;top:303px;width:1px;height:18px;background:#c0c0c0;"></div>
<span style="left:23px;top:307.42px;font-size:12.5px;line-height:12.5px;color:#000;transform:scaleX(0.86);transform-origin:0 0;word-spacing:-0.8px"><b style="letter-spacing:0.627px">Leucanthemum</b> × superbum 'Gruppenstolz'</span>
<span style="left:281px;top:307.42px;font-size:12.5px;line-height:12.5px;color:#000;font-weight:normal;transform:scaleX(0.88);transform-origin:0 0;">CMGR</span>
<span style="left:353px;top:307.42px;font-size:12.5px;line-height:12.5px;color:#000;font-weight:normal;transform:scaleX(0.87);transform-origin:0 0;">35</span>
<span style="left:400px;top:307.42px;font-size:12.5px;line-height:12.5px;color:#000;font-weight:normal;transform:scaleX(0.875);transform-origin:0 0;">P 0,5</span>
<div style="left:8px;top:321px;width:11px;height:1px;background:#ffffff;"></div>
<div style="left:8px;top:321px;width:1px;height:17px;background:#ffffff;"></div>
<div style="left:8px;top:337px;width:11px;height:1px;background:#a0a0a0;"></div>
<div style="left:18px;top:322px;width:1px;height:16px;background:#a0a0a0;"></div>
<div style="left:9px;top:322px;width:9px;height:15px;background:#f0f0f0;"></div>
<div style="left:19px;top:321px;width:1px;height:18px;background:#000;"></div>
<div style="left:8px;top:338px;width:12px;height:1px;background:#000;"></div>
<div style="left:20px;top:338px;width:569px;height:1px;background:#c0c0c0;"></div>
<div style="left:277px;top:321px;width:1px;height:18px;background:#c0c0c0;"></div>
<div style="left:349px;top:321px;width:1px;height:18px;background:#c0c0c0;"></div>
<div style="left:396px;top:321px;width:1px;height:18px;background:#c0c0c0;"></div>
<span style="left:23px;top:325.42px;font-size:12.5px;line-height:12.5px;color:#000;transform:scaleX(0.86);transform-origin:0 0;word-spacing:-0.8px"><b style="letter-spacing:0.436px">Liatris</b> spicata 'Alba'</span>
<span style="left:281px;top:325.42px;font-size:12.5px;line-height:12.5px;color:#000;font-weight:normal;transform:scaleX(0.88);transform-origin:0 0;">LispAl</span>
<span style="left:353px;top:325.42px;font-size:12.5px;line-height:12.5px;color:#000;font-weight:normal;transform:scaleX(0.87);transform-origin:0 0;">7</span>
<span style="left:400px;top:325.42px;font-size:12.5px;line-height:12.5px;color:#000;font-weight:normal;transform:scaleX(0.875);transform-origin:0 0;">P 0,5</span>
<div style="left:8px;top:339px;width:11px;height:1px;background:#ffffff;"></div>
<div style="left:8px;top:339px;width:1px;height:17px;background:#ffffff;"></div>
<div style="left:8px;top:355px;width:11px;height:1px;background:#a0a0a0;"></div>
<div style="left:18px;top:340px;width:1px;height:16px;background:#a0a0a0;"></div>
<div style="left:9px;top:340px;width:9px;height:15px;background:#f0f0f0;"></div>
<div style="left:19px;top:339px;width:1px;height:18px;background:#000;"></div>
<div style="left:8px;top:356px;width:12px;height:1px;background:#000;"></div>
<div style="left:20px;top:356px;width:569px;height:1px;background:#c0c0c0;"></div>
<div style="left:277px;top:339px;width:1px;height:18px;background:#c0c0c0;"></div>
<div style="left:349px;top:339px;width:1px;height:18px;background:#c0c0c0;"></div>
<div style="left:396px;top:339px;width:1px;height:18px;background:#c0c0c0;"></div>
<span style="left:23px;top:343.42px;font-size:12.5px;line-height:12.5px;color:#000;transform:scaleX(0.86);transform-origin:0 0;word-spacing:-0.8px"><b style="letter-spacing:0.553px">Ligustrum</b> vulgare 'Lodense'</span>
<span style="left:281px;top:343.42px;font-size:12.5px;line-height:12.5px;color:#000;font-weight:normal;transform:scaleX(0.88);transform-origin:0 0;">LVL</span>
<span style="left:353px;top:343.42px;font-size:12.5px;line-height:12.5px;color:#000;font-weight:normal;transform:scaleX(0.87);transform-origin:0 0;">203</span>
<span style="left:400px;top:343.42px;font-size:12.5px;line-height:12.5px;color:#000;font-weight:normal;transform:scaleX(0.875);transform-origin:0 0;">V.STR. 5 TR. 30- 40</span>
<div style="left:8px;top:357px;width:11px;height:1px;background:#ffffff;"></div>
<div style="left:8px;top:357px;width:1px;height:17px;background:#ffffff;"></div>
<div style="left:8px;top:373px;width:11px;height:1px;background:#a0a0a0;"></div>
<div style="left:18px;top:358px;width:1px;height:16px;background:#a0a0a0;"></div>
<div style="left:9px;top:358px;width:9px;height:15px;background:#f0f0f0;"></div>
<div style="left:19px;top:357px;width:1px;height:18px;background:#000;"></div>
<div style="left:8px;top:374px;width:12px;height:1px;background:#000;"></div>
<div style="left:20px;top:374px;width:569px;height:1px;background:#c0c0c0;"></div>
<div style="left:277px;top:357px;width:1px;height:18px;background:#c0c0c0;"></div>
<div style="left:349px;top:357px;width:1px;height:18px;background:#c0c0c0;"></div>
<div style="left:396px;top:357px;width:1px;height:18px;background:#c0c0c0;"></div>
<span style="left:23px;top:361.42px;font-size:12.5px;line-height:12.5px;color:#000;transform:scaleX(0.86);transform-origin:0 0;word-spacing:-0.8px"><b style="letter-spacing:0.549px">Muscari</b> armeniacum 'Blue Spike'</span>
<span style="left:281px;top:361.42px;font-size:12.5px;line-height:12.5px;color:#000;font-weight:normal;transform:scaleX(0.88);transform-origin:0 0;">MAB</span>
<span style="left:353px;top:361.42px;font-size:12.5px;line-height:12.5px;color:#000;font-weight:normal;transform:scaleX(0.87);transform-origin:0 0;">140</span>
<span style="left:400px;top:361.42px;font-size:12.5px;line-height:12.5px;color:#000;font-weight:normal;transform:scaleX(0.875);transform-origin:0 0;">3 J.V.S. 2/1</span>
<div style="left:8px;top:375px;width:11px;height:1px;background:#ffffff;"></div>
<div style="left:8px;top:375px;width:1px;height:17px;background:#ffffff;"></div>
<div style="left:8px;top:391px;width:11px;height:1px;background:#a0a0a0;"></div>
<div style="left:18px;top:376px;width:1px;height:16px;background:#a0a0a0;"></div>
<div style="left:9px;top:376px;width:9px;height:15px;background:#f0f0f0;"></div>
<div style="left:19px;top:375px;width:1px;height:18px;background:#000;"></div>
<div style="left:8px;top:392px;width:12px;height:1px;background:#000;"></div>
<div style="left:20px;top:392px;width:569px;height:1px;background:#c0c0c0;"></div>
<div style="left:277px;top:375px;width:1px;height:18px;background:#c0c0c0;"></div>
<div style="left:349px;top:375px;width:1px;height:18px;background:#c0c0c0;"></div>
<div style="left:396px;top:375px;width:1px;height:18px;background:#c0c0c0;"></div>
<span style="left:23px;top:379.42px;font-size:12.5px;line-height:12.5px;color:#000;transform:scaleX(0.86);transform-origin:0 0;word-spacing:-0.8px"><b style="letter-spacing:0.54px">Narcissus</b> pseudonarcissus 'Exception'</span>
<span style="left:281px;top:379.42px;font-size:12.5px;line-height:12.5px;color:#000;font-weight:normal;transform:scaleX(0.88);transform-origin:0 0;">NPE</span>
<span style="left:353px;top:379.42px;font-size:12.5px;line-height:12.5px;color:#000;font-weight:normal;transform:scaleX(0.87);transform-origin:0 0;">105</span>
<span style="left:400px;top:379.42px;font-size:12.5px;line-height:12.5px;color:#000;font-weight:normal;transform:scaleX(0.875);transform-origin:0 0;">3 J.V.S. 2/1</span>
<div style="left:8px;top:393px;width:11px;height:1px;background:#ffffff;"></div>
<div style="left:8px;top:393px;width:1px;height:17px;background:#ffffff;"></div>
<div style="left:8px;top:409px;width:11px;height:1px;background:#a0a0a0;"></div>
<div style="left:18px;top:394px;width:1px;height:16px;background:#a0a0a0;"></div>
<div style="left:9px;top:394px;width:9px;height:15px;background:#f0f0f0;"></div>
<div style="left:19px;top:393px;width:1px;height:18px;background:#000;"></div>
<div style="left:8px;top:410px;width:12px;height:1px;background:#000;"></div>
<div style="left:20px;top:410px;width:569px;height:1px;background:#c0c0c0;"></div>
<div style="left:277px;top:393px;width:1px;height:18px;background:#c0c0c0;"></div>
<div style="left:349px;top:393px;width:1px;height:18px;background:#c0c0c0;"></div>
<div style="left:396px;top:393px;width:1px;height:18px;background:#c0c0c0;"></div>
<span style="left:23px;top:397.42px;font-size:12.5px;line-height:12.5px;color:#000;transform:scaleX(0.86);transform-origin:0 0;word-spacing:-0.8px"><b style="letter-spacing:0.481px">Parrotia</b> persica</span>
<span style="left:281px;top:397.42px;font-size:12.5px;line-height:12.5px;color:#000;font-weight:normal;transform:scaleX(0.88);transform-origin:0 0;">PPE</span>
<span style="left:353px;top:397.42px;font-size:12.5px;line-height:12.5px;color:#000;font-weight:normal;transform:scaleX(0.87);transform-origin:0 0;">3</span>
<span style="left:400px;top:397.42px;font-size:12.5px;line-height:12.5px;color:#000;font-weight:normal;transform:scaleX(0.875);transform-origin:0 0;">SOL. 4XV MDB 150-200 × 200-225</span>
<div style="left:8px;top:411px;width:11px;height:1px;background:#ffffff;"></div>
<div style="left:8px;top:411px;width:1px;height:17px;background:#ffffff;"></div>
<div style="left:8px;top:427px;width:11px;height:1px;background:#a0a0a0;"></div>
<div style="left:18px;top:412px;width:1px;height:16px;background:#a0a0a0;"></div>
<div style="left:9px;top:412px;width:9px;height:15px;background:#f0f0f0;"></div>
<div style="left:19px;top:411px;width:1px;height:18px;background:#000;"></div>
<div style="left:8px;top:428px;width:12px;height:1px;background:#000;"></div>
<div style="left:20px;top:428px;width:569px;height:1px;background:#c0c0c0;"></div>
<div style="left:277px;top:411px;width:1px;height:18px;background:#c0c0c0;"></div>
<div style="left:349px;top:411px;width:1px;height:18px;background:#c0c0c0;"></div>
<div style="left:396px;top:411px;width:1px;height:18px;background:#c0c0c0;"></div>
<span style="left:23px;top:415.42px;font-size:12.5px;line-height:12.5px;color:#000;transform:scaleX(0.86);transform-origin:0 0;word-spacing:-0.8px"><b style="letter-spacing:0.577px">Pennisetum</b> alopecuroides</span>
<span style="left:281px;top:415.42px;font-size:12.5px;line-height:12.5px;color:#000;font-weight:normal;transform:scaleX(0.88);transform-origin:0 0;">PCO</span>
<span style="left:353px;top:415.42px;font-size:12.5px;line-height:12.5px;color:#000;font-weight:normal;transform:scaleX(0.87);transform-origin:0 0;">14</span>
<span style="left:400px;top:415.42px;font-size:12.5px;line-height:12.5px;color:#000;font-weight:normal;transform:scaleX(0.875);transform-origin:0 0;">P 0,5</span>
<div style="left:589px;top:141px;width:1px;height:17px;background:#f0f0f0;"></div>
<div style="left:590px;top:141px;width:16px;height:297px;background:#f0f0f0;"></div>
<div style="left:590px;top:292px;width:15px;height:17px;background:#cdcdcd;"></div>
<div style="left:8px;top:438px;width:598px;height:16px;background:#f0f0f0;"></div>
<div style="left:25px;top:438px;width:17px;height:15px;background:#cdcdcd;"></div>
<div style="left:1px;top:461px;width:612px;height:1px;background:#ffffff;"></div>
<div style="left:1px;top:462px;width:612px;height:1px;background:#ffffff;"></div>
<div style="left:1px;top:461px;width:1px;height:23px;background:#ffffff;"></div>
<div style="left:3px;top:463px;width:363px;height:1px;background:#a0a0a0;"></div>
<div style="left:3px;top:463px;width:1px;height:20px;background:#a0a0a0;"></div>
<div style="left:3px;top:482px;width:363px;height:1px;background:#ffffff;"></div>
<div style="left:365px;top:464px;width:1px;height:19px;background:#ffffff;"></div>
<div style="left:366px;top:463px;width:245px;height:1px;background:#a0a0a0;"></div>
<div style="left:366px;top:463px;width:1px;height:20px;background:#a0a0a0;"></div>
<div style="left:366px;top:482px;width:245px;height:1px;background:#ffffff;"></div>
<div style="left:610px;top:464px;width:1px;height:19px;background:#ffffff;"></div>
<div style="left:367px;top:464px;width:243px;height:18px;background:#00ff00;"></div>
<div style="left:611px;top:461px;width:1px;height:23px;background:#ffffff;"></div>
<div style="left:612px;top:461px;width:1px;height:24px;background:#a8a098;"></div>
<div style="left:1px;top:483px;width:612px;height:1px;background:#f4f4f4;"></div>
<div style="left:1px;top:484px;width:612px;height:1px;background:#a8a098;"></div>
<span style="left:5px;top:466.84px;font-size:12px;line-height:12px;color:#000;font-weight:normal;transform:scaleX(0.905);transform-origin:0 0;">AKTUELLE PFLANZE: Hosta 'Snow Flakes'</span>
<span style="left:369px;top:466.84px;font-size:12px;line-height:12px;color:#000;font-weight:normal;transform:scaleX(0.97);transform-origin:0 0;">24 / 43</span>
<div style="left:0px;top:485px;width:614px;height:1px;background:#0078d7;"></div>
<svg style="left:0;top:0" width="614" height="486" viewBox="0 0 614 486">
<defs><pattern id="chkD" width="2" height="2" patternUnits="userSpaceOnUse"><rect width="2" height="2" fill="#fff"/><rect width="1" height="1" fill="#202020"/><rect x="1" y="1" width="1" height="1" fill="#202020"/></pattern><pattern id="chkL" width="2" height="2" patternUnits="userSpaceOnUse"><rect width="2" height="2" fill="#808080"/><rect width="1" height="1" fill="#fff"/></pattern><pattern id="chkG" width="2" height="2" patternUnits="userSpaceOnUse"><rect width="2" height="2" fill="#e0e0e0"/><rect width="1" height="1" fill="#8a8a8a"/><rect x="1" y="1" width="1" height="1" fill="#8a8a8a"/></pattern></defs>
<rect x="9" y="7" width="16" height="16" fill="#008080"/>
<path d="M10 8h7l1 1v5h-3v7h-5z" fill="#808000"/>
<rect x="14" y="11" width="1" height="2" fill="#008080"/>
<rect x="14" y="11" width="1" height="1" fill="#000"/><rect x="19" y="11" width="1" height="3" fill="#000"/>
<path d="M15 15l1-1h3l1 1v4l-1 1h-3l-1-1z" fill="#00ff00"/>
<path d="M14.5 15.5l1-1.5M15 19.5l1 1.5h3.5l0.5-1" fill="none" stroke="#000" stroke-width="1"/>
<rect x="21" y="14" width="2" height="2" fill="#000"/><path d="M21 16h2l1 2v2h-4v-2z" fill="#008000"/><path d="M20 20.5h4.5" stroke="#000" stroke-width="1"/>
<path d="M493.5 15.5h10" stroke="#fff" stroke-width="1"/>
<rect x="539.5" y="10.5" width="9" height="9" fill="none" stroke="#fff" stroke-width="1"/>
<path d="M585 10.5l10 10M595 10.5l-10 10" stroke="#fff" stroke-width="1.1"/>
<rect x="9.5" y="34.5" width="13" height="10" fill="#c8c8c8" stroke="#404040" stroke-width="1"/>
<rect x="11" y="36" width="8" height="5" fill="#909090" stroke="#404040" stroke-width="0.8"/>
<circle cx="12.5" cy="42.8" r="1.2" fill="#00a000"/><circle cx="18.8" cy="42.8" r="1.2" fill="#00a000"/>
<rect x="561" y="42.6" width="6" height="2" fill="#5f6b78"/>
<path d="M582.5 40V37.5h5.5v3.5" fill="none" stroke="#5f6b78" stroke-width="1.2"/><rect x="580.6" y="40.1" width="5.5" height="4" fill="none" stroke="#5f6b78" stroke-width="1.4"/>
<path d="M600.5 38.5l6 6M606.5 38.5l-6 6" stroke="#5f6b78" stroke-width="2"/>
<polygon points="32.38,74.26 30.65,78.44 27.44,81.65 23.26,83.38 18.74,83.38 14.56,81.65 11.35,78.44 9.62,74.26 9.62,69.74 11.35,65.56 14.56,62.35 18.74,60.62 23.26,60.62 27.44,62.35 30.65,65.56 32.38,69.74" fill="#a6a6a6" stroke="#4a4a4a" stroke-width="1.1"/>
<text x="20.6" y="76" font-family="Liberation Sans" font-size="9.8" fill="#fff" text-anchor="middle" textLength="18" lengthAdjust="spacingAndGlyphs" stroke="#fff" stroke-width="0.25">EXIT</text>
<path d="M52.8 69.5V62.7h4.5" fill="none" stroke="#8a8a8a" stroke-width="3.2"/>
<path d="M57 59l3.5 3.5-3.5 3.5" fill="none" stroke="#404040" stroke-width="1"/>
<path d="M53.5 72.5h5v5h-5z" fill="#808080" stroke="#404040" stroke-width="1"/>
<path d="M63 76l9-8.5-5.5-4.5-9.5 8z" fill="#fff" stroke="#202020" stroke-width="1"/>
<path d="M66 77l7-9 -2-1.5" fill="#fff" stroke="#202020" stroke-width="1"/>
<path d="M51.5 77.5h16l2.5 7h-15z" fill="#a8a8a8" stroke="#303030" stroke-width="1"/>
<path d="M68 77.5l2-2v9" fill="none" stroke="#303030" stroke-width="1"/>
<path d="M81.5 61.5h20v20h-19l-1-1z" fill="#b4b4b4" stroke="#404040" stroke-width="1.2"/>
<rect x="84.5" y="62" width="13.5" height="9.5" fill="#fff"/>
<path d="M84.5 71.5h13.5" stroke="#404040" stroke-width="1"/>
<path d="M87.5 64.5h8M87.5 66.5h8M87.5 68.5h8" stroke="#909090" stroke-width="0.9"/>
<rect x="85.2" y="75" width="10.5" height="6" fill="#505050"/><rect x="87" y="76" width="2.5" height="4.5" fill="#c8c8c8"/>
<rect x="82" y="62" width="1.5" height="1.5" fill="#fff"/>
<path d="M121.5 72V61.5h6.5l5.5 5.5V72" fill="#fff" stroke="#303030" stroke-width="1"/>
<path d="M128 61.5v5.5h5.5" fill="none" stroke="#303030" stroke-width="1"/>
<rect x="123.5" y="63" width="1.6" height="1.6" fill="#303030"/><rect x="130.5" y="63" width="1.6" height="1.6" fill="#303030"/>
<path d="M123 66.6h3M123 69.3h5.5M130 69.3h2" stroke="#303030" stroke-width="0.9"/>
<rect x="117.5" y="72.5" width="21" height="8" fill="#bcbcbc" stroke="#404040" stroke-width="1"/>
<path d="M117.5 77.5h21" stroke="#404040" stroke-width="1"/><rect x="137" y="72.5" width="2" height="8.5" fill="#404040"/>
<rect x="134" y="74" width="1.5" height="1.5" fill="#e0e0e0"/>
<rect x="118" y="81" width="19" height="2" fill="#404040"/>
<rect x="149.5" y="60" width="16" height="3" fill="#8a8a8a"/>
<rect x="150" y="60.8" width="1" height="1" fill="#fff"/><rect x="161" y="60.8" width="1" height="1" fill="#fff"/><rect x="163" y="60.8" width="1" height="1" fill="#fff"/>
<rect x="150" y="63" width="14.8" height="17" fill="#fff" stroke="#505050" stroke-width="1"/>
<rect x="149.5" y="80" width="16" height="2.5" fill="#8a8a8a"/><rect x="164.8" y="62" width="1" height="20" fill="#b0b0b0"/>
<path d="M152 65.5h10M152 68.5h10M152 71.5h10M152 74.5h10M152 77.5h10" stroke="#404040" stroke-width="1"/>
<path d="M189 67h15l-6 8.5v8l-3-2.5v-5.5z" fill="#404040"/>
<path d="M191.5 68l3.5 5.5 1 1v7" fill="none" stroke="#fff" stroke-width="1.1"/>
<g transform="translate(214,68) scale(1.0)"><rect x="1" y="1" width="14" height="6" fill="url(#chkL)"/><rect x="0.5" y="0.5" width="15" height="7" fill="none" stroke="#303030" stroke-width="1.1"/><path d="M15.5 0.5l1-2h4.5l1.5 1.5" fill="none" stroke="#303030" stroke-width="1.2"/><path d="M15 1l-2.5 8" stroke="#303030" stroke-width="1.1"/><path d="M1 8v4.5M2 9.5h11l2.5 3" fill="none" stroke="#303030" stroke-width="1.2"/><path d="M1.8 12.4l1.6 1.6-1.6 1.6-1.6-1.6z M14.8 12.4l1.6 1.6-1.6 1.6-1.6-1.6z" fill="#707070"/></g>
<rect x="241" y="62.5" width="11" height="17" fill="#383838"/>
<rect x="241.8" y="63.3" width="1.3" height="1.2" fill="#fff"/><rect x="249.9" y="63.3" width="1.3" height="1.2" fill="#fff"/>
<rect x="241.8" y="65.39999999999999" width="1.3" height="1.2" fill="#fff"/><rect x="249.9" y="65.39999999999999" width="1.3" height="1.2" fill="#fff"/>
<rect x="241.8" y="67.5" width="1.3" height="1.2" fill="#fff"/><rect x="249.9" y="67.5" width="1.3" height="1.2" fill="#fff"/>
<rect x="241.8" y="69.6" width="1.3" height="1.2" fill="#fff"/><rect x="249.9" y="69.6" width="1.3" height="1.2" fill="#fff"/>
<rect x="241.8" y="71.7" width="1.3" height="1.2" fill="#fff"/><rect x="249.9" y="71.7" width="1.3" height="1.2" fill="#fff"/>
<rect x="241.8" y="73.8" width="1.3" height="1.2" fill="#fff"/><rect x="249.9" y="73.8" width="1.3" height="1.2" fill="#fff"/>
<rect x="241.8" y="75.9" width="1.3" height="1.2" fill="#fff"/><rect x="249.9" y="75.9" width="1.3" height="1.2" fill="#fff"/>
<rect x="241.8" y="78.0" width="1.3" height="1.2" fill="#fff"/><rect x="249.9" y="78.0" width="1.3" height="1.2" fill="#fff"/>
<rect x="244" y="63.5" width="5" height="7" fill="#f4f4f4"/><rect x="244" y="71.5" width="5" height="7" fill="#f4f4f4"/>
<rect x="246" y="65" width="2" height="4.5" fill="#c8c8c8"/><rect x="246" y="73" width="2" height="4.5" fill="#c8c8c8"/>
<rect x="255" y="62.5" width="11" height="17" fill="#383838"/>
<rect x="255.8" y="63.3" width="1.3" height="1.2" fill="#fff"/><rect x="263.9" y="63.3" width="1.3" height="1.2" fill="#fff"/>
<rect x="255.8" y="65.39999999999999" width="1.3" height="1.2" fill="#fff"/><rect x="263.9" y="65.39999999999999" width="1.3" height="1.2" fill="#fff"/>
<rect x="255.8" y="67.5" width="1.3" height="1.2" fill="#fff"/><rect x="263.9" y="67.5" width="1.3" height="1.2" fill="#fff"/>
<rect x="255.8" y="69.6" width="1.3" height="1.2" fill="#fff"/><rect x="263.9" y="69.6" width="1.3" height="1.2" fill="#fff"/>
<rect x="255.8" y="71.7" width="1.3" height="1.2" fill="#fff"/><rect x="263.9" y="71.7" width="1.3" height="1.2" fill="#fff"/>
<rect x="255.8" y="73.8" width="1.3" height="1.2" fill="#fff"/><rect x="263.9" y="73.8" width="1.3" height="1.2" fill="#fff"/>
<rect x="255.8" y="75.9" width="1.3" height="1.2" fill="#fff"/><rect x="263.9" y="75.9" width="1.3" height="1.2" fill="#fff"/>
<rect x="255.8" y="78.0" width="1.3" height="1.2" fill="#fff"/><rect x="263.9" y="78.0" width="1.3" height="1.2" fill="#fff"/>
<rect x="258" y="63.5" width="5" height="7" fill="#f4f4f4"/><rect x="258" y="71.5" width="5" height="7" fill="#f4f4f4"/>
<rect x="260" y="65" width="2" height="4.5" fill="#c8c8c8"/><rect x="260" y="73" width="2" height="4.5" fill="#c8c8c8"/>
<rect x="277" y="60.5" width="25.5" height="22.5" fill="#404040"/>
<rect x="280.7" y="62.4" width="17.8" height="19" fill="#fff"/>
<rect x="278.3" y="62.3" width="1.6" height="1.6" fill="#fff"/><rect x="299.5" y="62.3" width="1.6" height="1.6" fill="#fff"/>
<rect x="278.3" y="66.6" width="1.6" height="1.6" fill="#fff"/><rect x="299.5" y="66.6" width="1.6" height="1.6" fill="#fff"/>
<rect x="278.3" y="70.4" width="1.6" height="1.6" fill="#fff"/><rect x="299.5" y="70.4" width="1.6" height="1.6" fill="#fff"/>
<rect x="278.3" y="74.6" width="1.6" height="1.6" fill="#fff"/><rect x="299.5" y="74.6" width="1.6" height="1.6" fill="#fff"/>
<rect x="278.3" y="78.4" width="1.6" height="1.6" fill="#fff"/><rect x="299.5" y="78.4" width="1.6" height="1.6" fill="#fff"/>
<g transform="translate(284,67) scale(1.0,1.05)"><path d="M1 9.5L0.5 5 2 1.5 5 0.8 7 0 10 0.5 14.5 0 12.5 2.5 9 4 5 5.5 2 8z" fill="#6a6a6a"/><path d="M2 8L5 5.5 9 4 14 1 11 6 8.5 9 3 9.5z" fill="#b4b4b4"/><path d="M2.5 9.8H8.8L11.2 6.5" fill="none" stroke="#6a6a6a" stroke-width="1.2"/><path d="M-0.5 11.5L1.5 9.5" stroke="#6a6a6a" stroke-width="1.2"/></g>
<rect x="312.5" y="64.5" width="16" height="19" fill="#fff" stroke="#404040" stroke-width="1.1"/>
<path d="M315 72.5h10.5M315 74.5h10.5M315 76.5h10.5M315 78.5h10.5M315 80.5h10.5" stroke="#404040" stroke-width="1"/>
<rect x="323.6" y="66.3" width="2" height="4" fill="none" stroke="#404040" stroke-width="0.9"/><path d="M318 67h3M317 68.8h4M316 70.6h5" stroke="#404040" stroke-width="0.8"/>
<g transform="translate(308,59) scale(1.0,1.0)"><path d="M1 9.5L0.5 5 2 1.5 5 0.8 7 0 10 0.5 14.5 0 12.5 2.5 9 4 5 5.5 2 8z" fill="#6a6a6a"/><path d="M2 8L5 5.5 9 4 14 1 11 6 8.5 9 3 9.5z" fill="#b4b4b4"/><path d="M2.5 9.8H8.8L11.2 6.5" fill="none" stroke="#6a6a6a" stroke-width="1.2"/><path d="M-0.5 11.5L1.5 9.5" stroke="#6a6a6a" stroke-width="1.2"/></g>
<rect x="352.5" y="63.5" width="16" height="20" fill="#fff" stroke="#404040" stroke-width="1"/>
<rect x="365" y="66" width="1.5" height="8" fill="#404040"/>
<path d="M355 76.5h7M355 78.5h7M355 80.5h7" stroke="#404040" stroke-width="1"/>
<rect x="346" y="76" width="7" height="2" fill="#a8a8a8"/>
<rect x="346.5" y="58.5" width="18" height="17" fill="#fff" stroke="#404040" stroke-width="1"/>
<rect x="346" y="58" width="19" height="2.5" fill="#808080"/>
<rect x="347" y="58.7" width="1" height="1" fill="#fff"/><rect x="361" y="58.7" width="1" height="1" fill="#fff"/><rect x="363" y="58.7" width="1" height="1" fill="#fff"/>
<path d="M362.5 81.5l8-9 2 1.8-8 9-3 1z" fill="#fff" stroke="#606060" stroke-width="1"/>
<rect x="348" y="63" width="2" height="1.5" fill="#303030"/><path d="M352 63.5h10" stroke="#303030" stroke-width="1.2"/>
<rect x="348" y="66" width="2" height="1.5" fill="#303030"/><path d="M352 66.5h10" stroke="#303030" stroke-width="1.2"/>
<rect x="348" y="69" width="2" height="1.5" fill="#303030"/><path d="M352 69.5h10" stroke="#303030" stroke-width="1.2"/>
<rect x="348" y="72" width="2" height="1.5" fill="#303030"/><path d="M352 72.5h10" stroke="#303030" stroke-width="1.2"/>
<rect x="385.5" y="63.5" width="16" height="20" fill="#fff" stroke="#404040" stroke-width="1"/>
<rect x="398" y="66" width="1.5" height="8" fill="#404040"/>
<path d="M388 76.5h7M388 78.5h7M388 80.5h7" stroke="#404040" stroke-width="1"/>
<rect x="379" y="76" width="7" height="2" fill="#a8a8a8"/>
<rect x="379.5" y="58.5" width="18" height="17" fill="#fff" stroke="#404040" stroke-width="1"/>
<rect x="379" y="58" width="19" height="2.5" fill="#808080"/>
<rect x="380" y="58.7" width="1" height="1" fill="#fff"/><rect x="394" y="58.7" width="1" height="1" fill="#fff"/><rect x="396" y="58.7" width="1" height="1" fill="#fff"/>
<path d="M395.5 81.5l8-9 2 1.8-8 9-3 1z" fill="#fff" stroke="#606060" stroke-width="1"/>
<path d="M382 63.5h13" stroke="#303030" stroke-width="1.2"/>
<path d="M382 66.5h13" stroke="#303030" stroke-width="1.2"/>
<path d="M382 69.5h13" stroke="#303030" stroke-width="1.2"/>
<path d="M382 72.5h13" stroke="#303030" stroke-width="1.2"/>
<g transform="translate(418.5,59.3) scale(1.0,1.0)"><path d="M1 9.5L0.5 5 2 1.5 5 0.8 7 0 10 0.5 14.5 0 11 6 8.5 9.5z M1.5 8.5L5 5.5 9 4 13.5 1" fill="none" stroke="#8a8a8a" stroke-width="1.1"/><path d="M-0.5 11.5L1.5 9.5" stroke="#8a8a8a" stroke-width="1.1"/></g>
<path d="M419.5 71v7.5h4.5M423 74.5l3 3-3 3" fill="none" stroke="#8a8a8a" stroke-width="1"/>
<g transform="translate(418.5,59.3) scale(1.0,1.0)"><path d="M1 9.5L0.5 5 2 1.5 5 0.8 7 0 10 0.5 14.5 0 11 6 8.5 9.5z M1.5 8.5L5 5.5 9 4 13.5 1" fill="none" stroke="#8a8a8a" stroke-width="1.1"/><path d="M-0.5 11.5L1.5 9.5" stroke="#8a8a8a" stroke-width="1.1"/></g>
<path d="M419.5 71v7.5h4.5M423 74.5l3 3-3 3" fill="none" stroke="#8a8a8a" stroke-width="1"/>
<rect x="428.5" y="74" width="11" height="4" fill="url(#chkG)"/>
<rect x="428.0" y="73.5" width="12" height="5" fill="none" stroke="#8a8a8a" stroke-width="1"/>
<path d="M440.0 74l1-1.5h3.5" fill="none" stroke="#8a8a8a" stroke-width="1.1"/>
<path d="M428.5 78.5v2.5M429.5 80h9l1.5 1.5" fill="none" stroke="#8a8a8a" stroke-width="1.1"/>
<circle cx="429.0" cy="82.3" r="1.4" fill="#8a8a8a"/><circle cx="438.0" cy="82.3" r="1.4" fill="#8a8a8a"/>
<path d="M463.5 71V63.8h6" fill="none" stroke="#7a7a7a" stroke-width="3"/>
<path d="M468 60l3.5 3.3-3.5 3.5" fill="none" stroke="#202020" stroke-width="1"/>
<rect x="459.5" y="74" width="11" height="4" fill="url(#chkD)"/>
<rect x="459.0" y="73.5" width="12" height="5" fill="none" stroke="#000" stroke-width="1"/>
<path d="M471.0 74l1-1.5h3.5" fill="none" stroke="#000" stroke-width="1.1"/>
<path d="M459.5 78.5v2.5M460.5 80h9l1.5 1.5" fill="none" stroke="#000" stroke-width="1.1"/>
<circle cx="460.0" cy="82.3" r="1.4" fill="#00b000"/><circle cx="469.0" cy="82.3" r="1.4" fill="#00b000"/>
<path d="M514 62H518V65H522V62H526V65H527L529 69V79H523V75H517V79H511V69L513 65H514Z" fill="#5c5c5c"/>
<rect x="513" y="70" width="1" height="2" fill="#fff" opacity="0.55"/><rect x="518.5" y="69" width="1" height="2" fill="#fff" opacity="0.55"/><rect x="522" y="70" width="1" height="2" fill="#fff" opacity="0.55"/><rect x="512.5" y="74" width="1" height="2" fill="#fff" opacity="0.45"/><rect x="524.5" y="75" width="1" height="2" fill="#fff" opacity="0.45"/>
<rect x="548.5" y="62.5" width="14" height="10" fill="#fff" stroke="#404040" stroke-width="1"/><rect x="548.5" y="62.5" width="14" height="1.5" fill="#404040"/>
<rect x="544.5" y="66.5" width="14" height="10" fill="#fff" stroke="#404040" stroke-width="1"/><rect x="544.5" y="66.5" width="14" height="1.5" fill="#404040"/>
<rect x="540.5" y="70.5" width="14" height="11" fill="#fff" stroke="#404040" stroke-width="1"/><rect x="540.5" y="70.5" width="14" height="1.5" fill="#404040"/>
<path d="M542 73.5h2M546 73.5h3M551 73.5h2M542 75.5h11M542 77.5h11M542 79.5h11" stroke="#404040" stroke-width="1"/>
<text x="588" y="80.5" font-family="Liberation Sans" font-weight="bold" font-size="26" fill="#606060" text-anchor="middle">?</text>
<rect x="12.5" y="110" width="2" height="9" fill="#000"/><path d="M14 114.5l8-4.5v9z" fill="#000"/>
<path d="M29.5 114.5l5.5-4.5v9z M35.5 114.5l5.5-4.5v9z" fill="#000"/>
<path d="M51 114.5l8-4.5v9z" fill="#000"/>
<path d="M78 114.5l-8-4.5v9z" fill="#000"/>
<path d="M88 110l6 4.5-6 4.5z M94 110l6 4.5-6 4.5z" fill="#000"/>
<path d="M115 114.5l-8-4.5v9z" fill="#000"/><rect x="115" y="110" width="2" height="9" fill="#000"/>
<path d="M451 114h8l-4 4z" fill="#000"/>
<path d="M536.3 115l2.3 3.3 4.2-5.6" fill="none" stroke="#000" stroke-width="2.2"/>
<path d="M11 270L17 275.5L11 281Z" fill="#000"/>
<path d="M594.3 152.3l3.3-3.6 3.3 3.6" fill="none" stroke="#606060" stroke-width="2.3"/>
<path d="M594.3 427l3.3 3.6 3.3-3.6" fill="none" stroke="#606060" stroke-width="2.3"/>
<path d="M18 442l-3.5 3.5 3.5 3.5" fill="none" stroke="#606060" stroke-width="2"/>
<path d="M579 442l3.5 3.5-3.5 3.5" fill="none" stroke="#606060" stroke-width="2"/>
</svg>
</body></html>
